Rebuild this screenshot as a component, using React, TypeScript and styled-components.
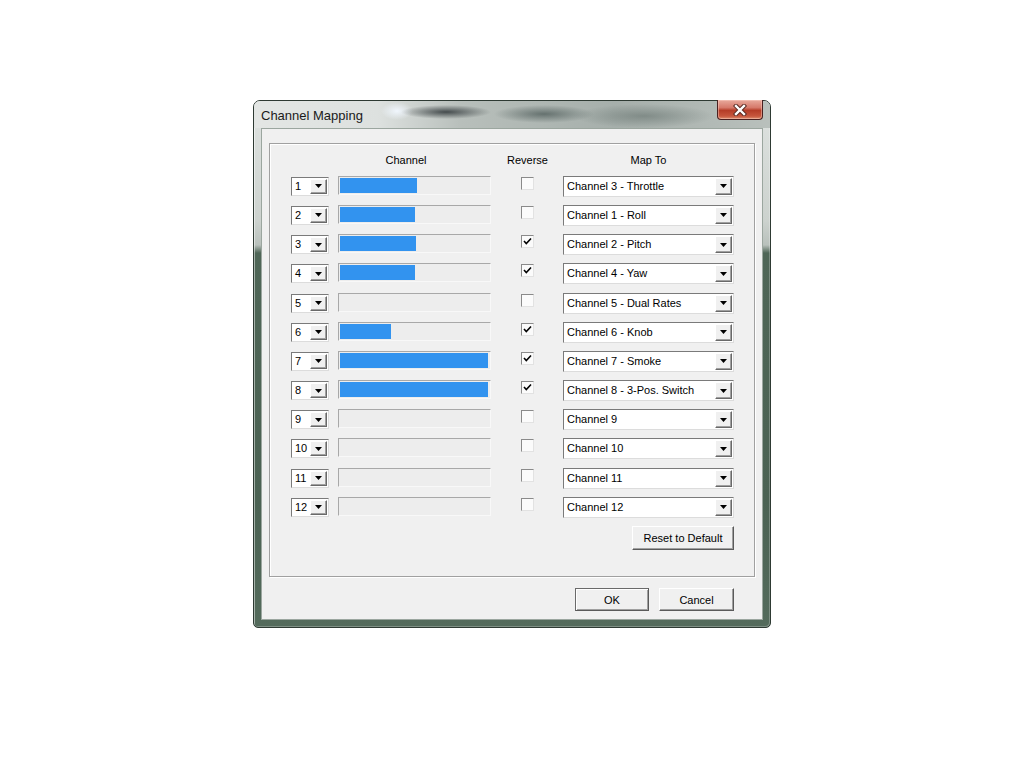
import React from "react";
import styled, { createGlobalStyle } from "styled-components";

const GlobalStyle = createGlobalStyle`
  html, body {
    margin: 0;
    padding: 0;
    background: #ffffff;
  }
  body {
    font-family: "Liberation Sans", Arial, sans-serif;
    font-size: 11px;
    color: #000;
  }
`;

const Desktop = styled.div`
  width: 1024px;
  height: 768px;
  padding: 100px 0 0 253px;
  box-sizing: border-box;
`;

const Window = styled.div`
  width: 518px;
  height: 528px;
  box-sizing: border-box;
  border: 1px solid #2e3a33;
  border-radius: 7px 7px 5px 5px;
  padding: 0 7px 7px 7px;
  display: flex;
  flex-direction: column;
  background: linear-gradient(
    to bottom,
    #dfe3e1 0px,
    #ccd2ce 120px,
    #b9c1bc 144px,
    #4f6657 152px,
    #4b6253 400px,
    #546b5c 100%
  );
  box-shadow: inset 1px 1px 0 rgba(255, 255, 255, 0.5),
    inset -1px -1px 0 rgba(255, 255, 255, 0.25);
`;

const TitleBar = styled.div`
  height: 27px;
  margin: 0 -7px;
  padding: 0 7px;
  display: flex;
  justify-content: space-between;
  align-items: flex-start;
  border-radius: 6px 6px 0 0;
  background: radial-gradient(ellipse 45px 7px at 192px 11px, rgba(55, 62, 64, 0.9), rgba(55, 62, 64, 0) 100%),
    radial-gradient(ellipse 16px 9px at 143px 10px, rgba(240, 246, 253, 1), rgba(240, 246, 253, 0) 100%),
    radial-gradient(ellipse 50px 9px at 290px 13px, rgba(70, 84, 82, 0.7), rgba(70, 84, 82, 0) 100%),
    radial-gradient(ellipse 70px 12px at 390px 15px, rgba(95, 108, 104, 0.55), rgba(95, 108, 104, 0) 100%),
    linear-gradient(to right, #e3e6e4 0%, #dde1df 24%, #b8bfbb 40%, #a6afab 70%, #b9c0bc 100%);
`;

const Title = styled.div`
  font-size: 13px;
  line-height: 27px;
  padding-top: 1px;
  color: #1a1a1a;
`;

const CloseButton = styled.div`
  width: 46px;
  height: 20px;
  margin-top: -1px;
  box-sizing: border-box;
  border: 1px solid #4a2020;
  border-top: none;
  border-radius: 0 0 4px 4px;
  background: linear-gradient(to bottom, #e8a99c 0%, #d6796a 40%, #b53c27 55%, #c7563d 85%, #dd9070 100%);
  box-shadow: inset 0 0 0 1px rgba(255, 210, 200, 0.45);
  display: flex;
  align-items: center;
  justify-content: center;
`;

const Client = styled.div`
  flex: 1;
  background: #f0f0f0;
  border: 1px solid #9ba69f;
  display: flex;
  flex-direction: column;
  padding: 14px 7px 0 7px;
`;

const GroupBox = styled.div`
  height: 434px;
  box-sizing: border-box;
  border: 1px solid #a0a0a0;
  box-shadow: inset 1px 1px 0 #ffffff, 1px 1px 0 #ffffff;
  padding: 0 20px 26px 21px;
  display: flex;
  flex-direction: column;
`;

const Grid = styled.div`
  display: grid;
  grid-template-columns: 47px 183px 42px 171px;
  grid-auto-rows: 29.2px;
`;

const HeaderRow = styled.div`
  display: grid;
  grid-template-columns: 47px 183px 42px 171px;
  height: 32px;
  align-items: center;
`;

const HeaderCell = styled.div<{ $span?: number; $width?: number }>`
  grid-column: span ${({ $span }) => $span ?? 1};
  width: ${({ $width }) => ($width ? `${$width}px` : "auto")};
  display: flex;
  justify-content: center;
  white-space: nowrap;
  line-height: 14px;
  padding-top: 1px;
`;

const SmallCombo = styled.div`
  width: 38px;
  height: 19px;
  margin-top: 1px;
  box-sizing: border-box;
  border-top: 1px solid #7a7a7a;
  border-left: 1px solid #7a7a7a;
  border-right: 1px solid #dcdcdc;
  border-bottom: 1px solid #dcdcdc;
  background: #fff;
  display: flex;
`;

const WideCombo = styled(SmallCombo)`
  width: 171px;
  height: 21px;
  margin-top: 0;
`;

const ComboText = styled.div`
  flex: 1;
  padding-left: 3px;
  line-height: 17px;
  white-space: nowrap;
  overflow: hidden;
`;

const WideComboText = styled(ComboText)`
  line-height: 19px;
`;

const DropButton = styled.div<{ $width: number }>`
  width: ${({ $width }) => $width}px;
  margin: 1px 1px 1px 0;
  box-sizing: border-box;
  background: #f0f0f0;
  border-top: 1px solid #ffffff;
  border-left: 1px solid #ffffff;
  border-right: 1px solid #696969;
  border-bottom: 1px solid #696969;
  box-shadow: inset -1px -1px 0 #a0a0a0;
  display: flex;
  align-items: center;
  justify-content: center;
`;

const Track = styled.div`
  width: 153px;
  height: 19px;
  box-sizing: border-box;
  border-top: 1px solid #a8a8a8;
  border-left: 1px solid #a8a8a8;
  border-right: 1px solid #f8f8f8;
  border-bottom: 1px solid #f8f8f8;
  background: #ededed;
  padding: 1px;
`;

const Fill = styled.div`
  height: 100%;
  background: #3293ef;
`;

const CheckBox = styled.div`
  width: 13px;
  height: 13px;
  margin-top: 1px;
  box-sizing: border-box;
  border-top: 1px solid #8a8a8a;
  border-left: 1px solid #8a8a8a;
  border-right: 1px solid #e2e2e2;
  border-bottom: 1px solid #e2e2e2;
  background: #fbfbfb;
  display: flex;
  align-items: center;
  justify-content: center;
`;

const ResetRow = styled.div`
  display: flex;
  justify-content: flex-end;
`;

const Button = styled.div<{ $width: number; $default?: boolean }>`
  width: ${({ $width }) => $width}px;
  height: 23px;
  box-sizing: border-box;
  background: #f0f0f0;
  border-top: 1px solid ${({ $default }) => ($default ? "#6a6a6a" : "#ffffff")};
  border-left: 1px solid ${({ $default }) => ($default ? "#6a6a6a" : "#ffffff")};
  border-right: 1px solid #5a5a5a;
  border-bottom: 1px solid #5a5a5a;
  box-shadow: ${({ $default }) =>
    $default
      ? "inset 1px 1px 0 #ffffff, inset -1px -1px 0 #a0a0a0"
      : "inset -1px -1px 0 #a0a0a0"};
  display: flex;
  align-items: center;
  justify-content: center;
  white-space: nowrap;
`;

const ResetButton = styled(Button)`
  height: 24px;
`;

const Footer = styled.div`
  display: flex;
  justify-content: flex-end;
  gap: 10px;
  padding: 11px 21px 0 0;
`;

const Arrow = () => (
  <svg width="7" height="4" viewBox="0 0 7 4">
    <polygon points="0,0 7,0 3.5,4" fill="#000" />
  </svg>
);

const CheckMark = () => (
  <svg width="9" height="9" viewBox="0 0 9 9">
    <path d="M1 4 L3.3 6.5 L8 1.5" stroke="#000" strokeWidth="1.6" fill="none" />
  </svg>
);

const CloseGlyph = () => (
  <svg width="14" height="12" viewBox="0 0 14 12">
    <path d="M3 2 L11 10 M11 2 L3 10" stroke="#5a2a22" strokeWidth="4.4" strokeLinecap="square" />
    <path d="M3 2 L11 10 M11 2 L3 10" stroke="#ffffff" strokeWidth="2.4" strokeLinecap="square" />
  </svg>
);

interface ChannelRow {
  id: number;
  value: number;
  reverse: boolean;
  mapTo: string;
}

const rows: ChannelRow[] = [
  { id: 1, value: 77, reverse: false, mapTo: "Channel 3 - Throttle" },
  { id: 2, value: 75, reverse: false, mapTo: "Channel 1 - Roll" },
  { id: 3, value: 76, reverse: true, mapTo: "Channel 2 - Pitch" },
  { id: 4, value: 75, reverse: true, mapTo: "Channel 4 - Yaw" },
  { id: 5, value: 0, reverse: false, mapTo: "Channel 5 - Dual Rates" },
  { id: 6, value: 51, reverse: true, mapTo: "Channel 6 - Knob" },
  { id: 7, value: 148, reverse: true, mapTo: "Channel 7 - Smoke" },
  { id: 8, value: 148, reverse: true, mapTo: "Channel 8 - 3-Pos. Switch" },
  { id: 9, value: 0, reverse: false, mapTo: "Channel 9" },
  { id: 10, value: 0, reverse: false, mapTo: "Channel 10" },
  { id: 11, value: 0, reverse: false, mapTo: "Channel 11" },
  { id: 12, value: 0, reverse: false, mapTo: "Channel 12" },
];

export default function App() {
  return (
    <>
      <GlobalStyle />
      <Desktop>
        <Window>
          <TitleBar>
            <Title>Channel Mapping</Title>
            <CloseButton>
              <CloseGlyph />
            </CloseButton>
          </TitleBar>
          <Client>
            <GroupBox>
              <HeaderRow>
                <HeaderCell $span={2}>Channel</HeaderCell>
                <HeaderCell $width={13}>Reverse</HeaderCell>
                <HeaderCell>Map To</HeaderCell>
              </HeaderRow>
              <Grid>
                {rows.map((row) => (
                  <React.Fragment key={row.id}>
                    <SmallCombo>
                      <ComboText>{row.id}</ComboText>
                      <DropButton $width={17}>
                        <Arrow />
                      </DropButton>
                    </SmallCombo>
                    <Track>
                      {row.value > 0 && <Fill style={{ width: row.value }} />}
                    </Track>
                    <CheckBox>{row.reverse && <CheckMark />}</CheckBox>
                    <WideCombo>
                      <WideComboText>{row.mapTo}</WideComboText>
                      <DropButton $width={17}>
                        <Arrow />
                      </DropButton>
                    </WideCombo>
                  </React.Fragment>
                ))}
              </Grid>
              <ResetRow>
                <ResetButton $width={102}>Reset to Default</ResetButton>
              </ResetRow>
            </GroupBox>
            <Footer>
              <Button $width={74} $default>
                OK
              </Button>
              <Button $width={75}>Cancel</Button>
            </Footer>
          </Client>
        </Window>
      </Desktop>
    </>
  );
}
